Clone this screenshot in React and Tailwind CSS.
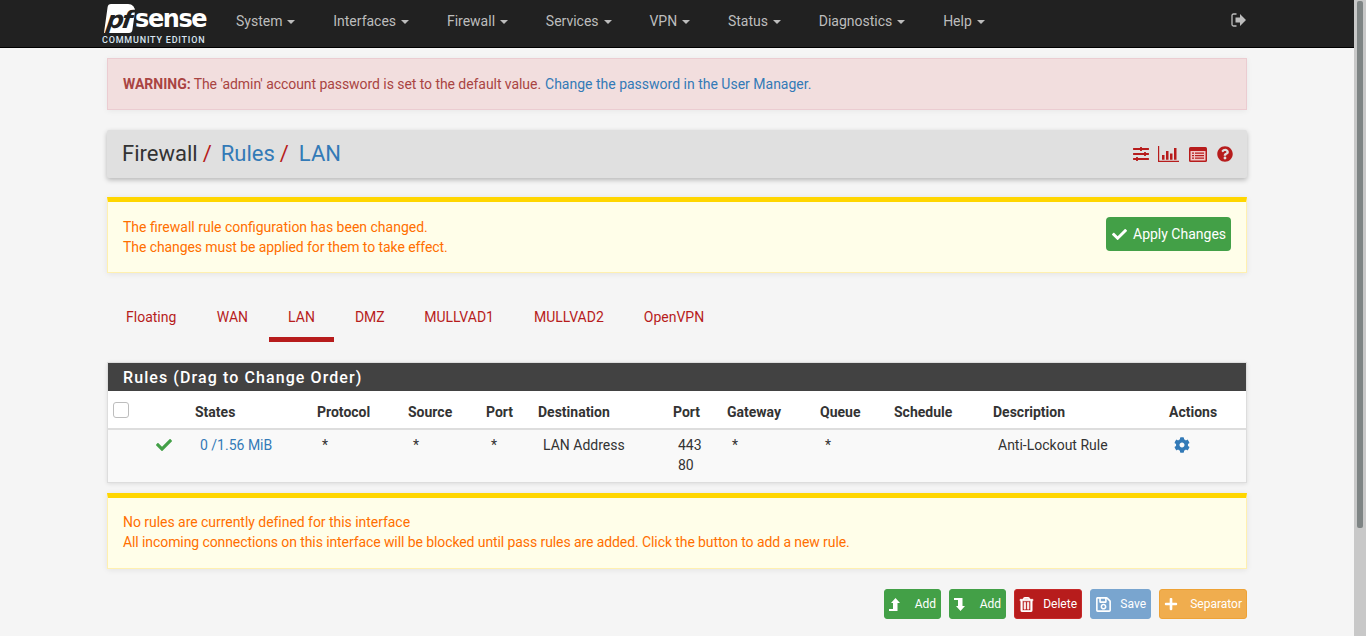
import React from 'react';
import { FaCheck, FaCog, FaPlus, FaQuestionCircle, FaRegSave, FaRegTrashAlt, FaSlidersH } from 'react-icons/fa';

const menu = ['System', 'Interfaces', 'Firewall', 'Services', 'VPN', 'Status', 'Diagnostics', 'Help'];
const tabs = ['Floating', 'WAN', 'LAN', 'DMZ', 'MULLVAD1', 'MULLVAD2', 'OpenVPN'];

function Caret() {
  return <span className="ml-[5px] inline-block align-middle w-0 h-0 border-x-4 border-x-transparent border-t-4 border-t-current" />;
}

function SignOut() {
  return (
    <svg width="16" height="14" viewBox="0 0 16 14" fill="none">
      <path d="M5.5 1H2.5A1.5 1.5 0 0 0 1 2.500v9A1.500 1.500 0 0 0 2.500 13h3" stroke="currentColor" strokeWidth="1.300" />
      <path d="M4.500 4.500H9V1l6 6-6 6V9.500H4.500z" fill="currentColor" />
    </svg>
  );
}

function BarChart() {
  return (
    <svg width="21" height="16" viewBox="0 0 21 16" fill="currentColor">
      <path d="M0 0h1.200v14.800H21V16H0z" />
      <path d="M4 9h2.500v4.800H4zM8 5h2.500v8.800H8zM12 7.500h2.500v6.300H12zM16 2h2.500v11.800H16z" />
    </svg>
  );
}

function ListAlt() {
  return (
    <svg width="18" height="15" viewBox="0 0 18 15">
      <rect width="18" height="15" rx="1.500" fill="currentColor" />
      <rect x="1.500" y="4" width="15" height="9.500" fill="#f0c8c8" />
      <path d="M3 5.500h2v1.300H3zM6 5.500h9v1.300H6zM3 8h2v1.300H3zM6 8h9v1.300H6zM3 10.500h2v1.300H3zM6 10.500h9v1.300H6z" fill="currentColor" />
    </svg>
  );
}

function LevelUp() {
  return (
    <svg width="11" height="13" viewBox="0 0 11 13" fill="currentColor">
      <path d="M0 11h4V5H2l4.500-5L11 5H8.500v8H0z" />
    </svg>
  );
}

function LevelDown() {
  return (
    <svg width="11" height="13" viewBox="0 0 11 13" fill="currentColor">
      <path d="M0 0h8.500v8H11l-4.500 5L2 8h2V2H0z" />
    </svg>
  );
}

function Logo() {
  return (
    <div className="w-[106px] shrink-0 mt-[3px]">
      <div className="flex items-end h-[29px] ml-[4px]">
        <div className="w-[28px] h-[29px] bg-white rounded-tl-[3px] rounded-tr-[8px] rounded-br-[3px] skew-x-[-8deg] flex items-end justify-center">
          <span className="text-[#212121] text-[24px] font-black italic leading-[26px] font-['DejaVu_Sans'] tracking-[-2px] pr-[2px]">pf</span>
        </div>
        <span className="text-white text-[24px] font-black leading-[28px] font-['DejaVu_Sans'] tracking-[-1.400px] ml-[1px]">sense</span>
      </div>
      <div className="text-[#d9e6f2] text-[9px] leading-[11px] tracking-[0.800px] mt-[2px] font-medium whitespace-nowrap">COMMUNITY EDITION</div>
    </div>
  );
}

function ActionButton({ icon, label, color, width }) {
  return (
    <button className={`h-[30px] rounded-[3px] border flex items-center justify-between text-white text-[12px] pl-[4px] pr-[4px] ${color} ${width}`}>
      {icon}
      <span>{label}</span>
    </button>
  );
}

function YellowBox({ children, className }) {
  return (
    <div className={`bg-[#fffee9] border-t-[5px] border-t-[#ffd600] border-x border-b border-x-[#fff0b0] border-b-[#fff0b0] shadow-[0_1px_6px_rgba(0,0,0,0.08)] text-[#ff6f00] text-[14px] leading-[20px] ${className}`}>
      {children}
    </div>
  );
}

export default function App() {
  return (
    <div className="relative h-[636px] overflow-hidden bg-[#f5f5f5] font-['Roboto',sans-serif] text-[14px] text-[#333333]">
      <nav className="h-[48px] bg-[#212121] border-b border-black flex items-center pl-[102px] pr-[119px]">
        <Logo />
        <div className="flex ml-[28px] gap-[37.800px] mb-[4px] text-[#bdbdbd] text-[14px]">
          {menu.map((m) => (
            <span key={m} className="whitespace-nowrap">{m}<Caret /></span>
          ))}
        </div>
        <span className="ml-auto mb-[7px] text-[#bdbdbd]"><SignOut /></span>
      </nav>

      <main className="ml-[107px] w-[1140px]">
        <div className="mt-[10px] h-[52px] bg-[#f2dede] border border-[#ebccd1] shadow-[0_1px_6px_rgba(0,0,0,0.06)] text-[#a94442] flex items-center px-[15px]">
          <b>WARNING:</b>
          <span className="ml-[3px] tracking-[-0.060px]">The 'admin' account password is set to the default value.</span>
          <span className="ml-[4px] text-[#337ab7]">Change the password in the User Manager.</span>
        </div>

        <div className="mt-[20px] h-[48px] bg-[#e0e0e0] rounded-[2px] shadow-[0_2px_5px_rgba(0,0,0,0.26)] flex items-center pl-[15px] pr-[14px] text-[22px]">
          <div className="flex pb-[2px]">
            <span>Firewall</span>
            <span className="text-[#b71c1c] ml-[5px]">/</span>
            <span className="text-[#337ab7] ml-[9px]">Rules</span>
            <span className="text-[#b71c1c] ml-[5px]">/</span>
            <span className="text-[#337ab7] ml-[10px]">LAN</span>
          </div>
          <div className="ml-auto flex items-center text-[#b71c1c]">
            <FaSlidersH size={16} />
            <span className="ml-[9px]"><BarChart /></span>
            <span className="ml-[10px]"><ListAlt /></span>
            <FaQuestionCircle size={16} className="ml-[10px]" />
          </div>
        </div>

        <YellowBox className="mt-[19px] h-[76px] pl-[15px] pr-[15px] flex items-center justify-between">
          <div>
            <div>The firewall rule configuration has been changed.</div>
            <div className="tracking-[-0.080px]">The changes must be applied for them to take effect.</div>
          </div>
          <button className="w-[125px] h-[34px] mb-[6px] bg-[#43a047] rounded-[4px] text-white flex items-center pl-[6px]">
            <FaCheck size={15} />
            <span className="ml-[6px]">Apply Changes</span>
          </button>
        </YellowBox>

        <div className="mt-[20px] h-[49px] flex text-[#b71c1c]">
          {tabs.map((t) => (
            <div key={t} className={`pl-[19px] pt-[14px] whitespace-nowrap ${t === 'Floating' ? 'pr-[19.500px] mr-[2px]' : t === 'DMZ' ? 'pr-[19.500px] mr-[1px]' : 'pr-[19px] mr-[2px]'} ${t === 'LAN' ? 'border-b-[5px] border-b-[#b71c1c]' : ''}`}>{t}</div>
          ))}
        </div>

        <div className="mt-[20px] bg-white border border-[#dddddd] shadow-[0_1px_4px_rgba(0,0,0,0.1)]">
          <div className="h-[28px] bg-[#424242] text-white text-[16px] font-medium tracking-[1.090px] leading-[29px] pl-[15px]">Rules (Drag to Change Order)</div>
          <div className="h-[39px] pt-[6px] flex items-center font-bold border-b-2 border-[#dddddd]">
            <span className="w-[16px] h-[16px] ml-[5px] mb-[6px] rounded-[3px] border border-[#bdbdbd] bg-white" />
            <span className="ml-[66px] w-[122px]">States</span>
            <span className="w-[91px]">Protocol</span>
            <span className="w-[78px]">Source</span>
            <span className="w-[52px]">Port</span>
            <span className="w-[135px]">Destination</span>
            <span className="w-[54px]">Port</span>
            <span className="w-[93px]">Gateway</span>
            <span className="w-[74px]">Queue</span>
            <span className="w-[99px]">Schedule</span>
            <span className="w-[176px]">Description</span>
            <span>Actions</span>
          </div>
          <div className="h-[52px] bg-[#f9f9f9] flex items-start pt-[5px] leading-[20px]">
            <FaCheck size={16} className="ml-[48px] mt-[2px] text-[#43a047]" />
            <span className="ml-[28px] w-[122px] text-[#337ab7]">0 /1.56 MiB</span>
            <span className="w-[91px]">*</span>
            <span className="w-[78px]">*</span>
            <span className="w-[52px]">*</span>
            <span className="w-[135px]">LAN Address</span>
            <span className="w-[54px]">443<br />80</span>
            <span className="w-[93px]">*</span>
            <span className="w-[74px]">*</span>
            <span className="w-[99px]" />
            <span className="w-[176px]">Anti-Lockout Rule</span>
            <FaCog size={16} className="mt-[2px] text-[#337ab7]" />
          </div>
        </div>

        <YellowBox className="mt-[10px] h-[76px] pl-[15px] pt-[14px]">
          <div className="tracking-[-0.040px]">No rules are currently defined for this interface</div>
          <div className="tracking-[-0.090px]">All incoming connections on this interface will be blocked until pass rules are added. Click the button to add a new rule.</div>
        </YellowBox>

        <div className="mt-[20px] flex justify-end gap-[8px]">
          <ActionButton icon={<LevelUp />} label="Add" width="w-[57px]" color="bg-[#43a047] border-[#43a047]" />
          <ActionButton icon={<LevelDown />} label="Add" width="w-[57px]" color="bg-[#43a047] border-[#43a047]" />
          <ActionButton icon={<FaRegTrashAlt size={15} stroke="currentColor" strokeWidth={24} />} label="Delete" width="w-[68px]" color="bg-[#b71c1c] border-[#c62828]" />
          <ActionButton icon={<FaRegSave size={17} />} label="Save" width="w-[61px]" color="bg-[#79a5cf] border-[#79a5cf]" />
          <ActionButton icon={<FaPlus size={14} />} label="Separator" width="w-[88px]" color="bg-[#f0ad4e] border-[#eea236]" />
        </div>
      </main>

      <div className="absolute top-0 right-0 bottom-0 w-[12px] bg-[#c8c8c8]">
        <div className="ml-[3px] mt-[1px] w-[6px] h-[527px] rounded-[2px] bg-[#7e8484]" />
      </div>
    </div>
  );
}
